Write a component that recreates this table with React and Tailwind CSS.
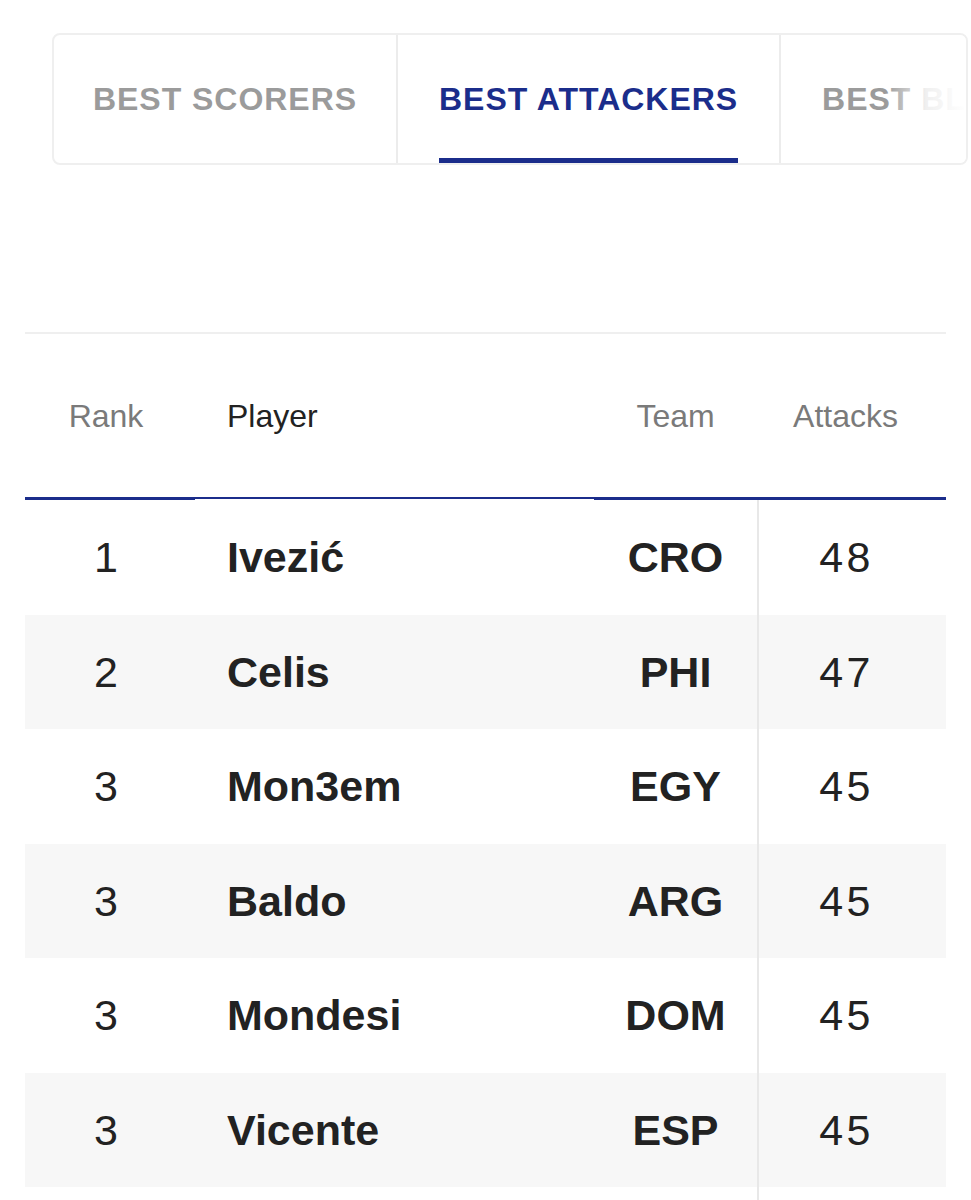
import React from "react";

const tabs = [
  { label: "BEST SCORERS", active: false },
  { label: "BEST ATTACKERS", active: true },
  { label: "BEST BLOCKERS", active: false },
];

const rows = [
  { rank: 1, player: "Ivezić", team: "CRO", attacks: 48 },
  { rank: 2, player: "Celis", team: "PHI", attacks: 47 },
  { rank: 3, player: "Mon3em", team: "EGY", attacks: 45 },
  { rank: 3, player: "Baldo", team: "ARG", attacks: 45 },
  { rank: 3, player: "Mondesi", team: "DOM", attacks: 45 },
  { rank: 3, player: "Vicente", team: "ESP", attacks: 45 },
];

const App = () => {
  return (
    <div
      className="w-[971px] h-[1200px] bg-white overflow-hidden"
      style={{ fontFamily: '"Liberation Sans", Arial, sans-serif' }}
    >
      {/* tabs */}
      <div className="pt-[33px] pl-[52px] pr-[3px]">
        <div className="relative flex h-[132px] border-2 border-[#efefef] rounded-lg overflow-hidden">
          {tabs.map((tab, i) => (
            <div
              key={i}
              className={`flex items-stretch shrink-0 ${
                i > 0 ? "px-[41px] border-l-2 border-[#ececec]" : "px-[39px]"
              }`}
            >
              <div
                className={`flex items-center pt-[4px] text-[32px] font-bold tracking-[0.03em] border-b-[5px] ${
                  tab.active
                    ? "text-[#1b2d8b] border-[#1b2d8b]"
                    : "text-[#9b9b9b] border-transparent"
                }`}
              >
                {tab.label}
              </div>
            </div>
          ))}
          <div className="absolute right-0 top-0 bottom-0 w-[80px] bg-gradient-to-r from-white/0 via-white/85 to-white" />
        </div>
      </div>

      {/* table */}
      <div className="mt-[167px] ml-[25px] w-[921px]">
        <div className="flex h-[168px] border-t-2 border-[#efefef] text-[32px] text-[#7a7a7a]">
          <div className="w-[170px] flex items-center justify-center pr-2 border-b-[3px] border-[#1b2d8b]">
            Rank
          </div>
          <div className="w-[399px] flex items-center pl-8 text-[#222] border-b-2 border-[#1b2d8b] mb-px">
            Player
          </div>
          <div className="w-[163px] flex items-center justify-center border-b-[3px] border-[#1b2d8b]">
            Team
          </div>
          <div className="w-[189px] flex items-center justify-center pr-3 border-b-[3px] border-[#1b2d8b]">
            Attacks
          </div>
        </div>

        {rows.map((r, i) => (
          <div
            key={i}
            className={`flex h-[114.5px] text-[43px] text-[#222] ${
              i % 2 === 1 ? "bg-[#f7f7f7]" : "bg-white"
            }`}
          >
            <div className="w-[170px] flex items-center justify-center pr-2">{r.rank}</div>
            <div className="w-[399px] flex items-center pl-8 font-bold">{r.player}</div>
            <div className="w-[163px] flex items-center justify-center font-bold">{r.team}</div>
            <div className="w-[189px] flex items-center justify-center pr-3 tracking-[0.08em] border-l-2 border-[#e8e8e8]">
              {r.attacks}
            </div>
          </div>
        ))}
        <div className="flex h-[40px]">
          <div className="w-[732px]" />
          <div className="w-[189px] border-l-2 border-[#e8e8e8]" />
        </div>
      </div>
    </div>
  );
};

export default App;
